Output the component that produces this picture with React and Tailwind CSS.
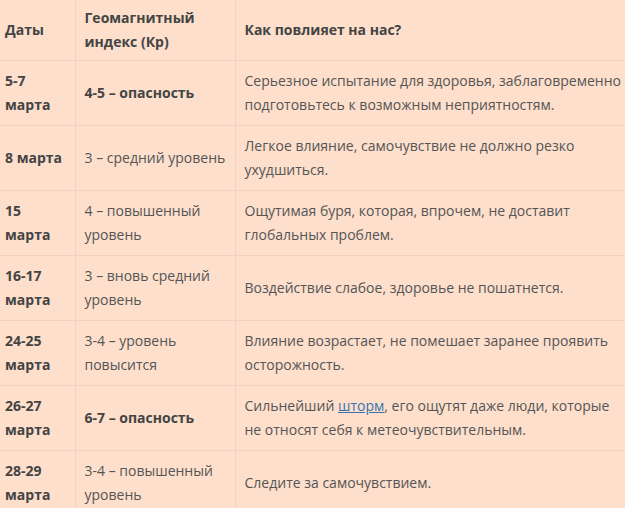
const rows = [
  { date: ["5-7", "марта"], kp: "4-5 – опасность", bold: true, text: ["Серьезное испытание для здоровья, заблаговременно", "подготовьтесь к возможным неприятностям."] },
  { date: ["8 марта"], kp: "3 – средний уровень", text: ["Легкое влияние, самочувствие не должно резко", "ухудшиться."] },
  { date: ["15", "марта"], kp: ["4 – повышенный", "уровень"], text: ["Ощутимая буря, которая, впрочем, не доставит", "глобальных проблем."] },
  { date: ["16-17", "марта"], kp: ["3 – вновь средний", "уровень"], text: ["Воздействие слабое, здоровье не пошатнется."] },
  { date: ["24-25", "марта"], kp: ["3-4 – уровень", "повысится"], text: ["Влияние возрастает, не помешает заранее проявить", "осторожность."] },
  { date: ["26-27", "марта"], kp: "6-7 – опасность", bold: true, link: true },
  { date: ["28-29", "марта"], kp: ["3-4 – повышенный", "уровень"], text: ["Следите за самочувствием."] },
];

function Lines({ items }) {
  const list = Array.isArray(items) ? items : [items];
  return list.map((l, i) => <div key={i}>{l}</div>);
}

export default function App() {
  return (
    <div className="w-[625px] h-[508px] overflow-hidden bg-[#fddfcc] text-[14px] leading-[24px] text-[#555] font-['Open_Sans',sans-serif]">
      <table className="w-[640px] table-fixed border-collapse">
        <colgroup>
          <col className="w-[75px]" />
          <col className="w-[160px]" />
          <col />
        </colgroup>
        <thead>
          <tr className="h-[60px] border-b border-[#f1d2c0] font-bold text-[#444]">
            <td className="pl-[5px] align-middle">Даты</td>
            <td className="pl-[9px] border-l border-[#f1d2c0] align-middle">
              <div>Геомагнитный</div>
              <div>индекс (Кр)</div>
            </td>
            <td className="pl-[9px] border-l border-[#f1d2c0] align-middle">Как повлияет на нас?</td>
          </tr>
        </thead>
        <tbody>
          {rows.map((r, i) => (
            <tr key={i} className="h-[65px] border-b border-[#f1d2c0]">
              <td className="pl-[5px] align-middle font-bold text-[#444]">
                <Lines items={r.date} />
              </td>
              <td className={`pl-[9px] border-l border-[#f1d2c0] align-middle ${r.bold ? "font-bold text-[#444]" : ""}`}>
                <Lines items={r.kp} />
              </td>
              <td className="pl-[9px] border-l border-[#f1d2c0] align-middle">
                {r.link ? (
                  <>
                    <div>
                      Сильнейший <a href="#" className="text-[#3b73b0] underline">шторм</a>, его ощутят даже люди, которые
                    </div>
                    <div>не относят себя к метеочувствительным.</div>
                  </>
                ) : (
                  <Lines items={r.text} />
                )}
              </td>
            </tr>
          ))}
        </tbody>
      </table>
    </div>
  );
}
